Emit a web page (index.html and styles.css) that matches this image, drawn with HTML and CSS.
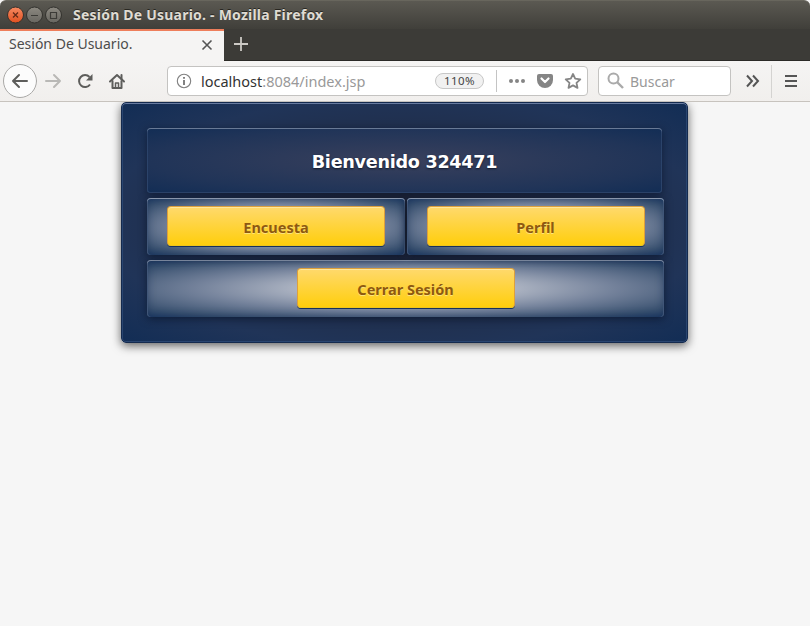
FILE: index.html
```html
<!DOCTYPE html>
<html lang="es">
<head>
<meta charset="utf-8">
<title>Sesión De Usuario.</title>
<link rel="stylesheet" href="styles.css">
</head>
<body>
<div class="window">
  <header class="titlebar">
    <svg class="controls" width="60" height="18" viewBox="0 0 60 18">
      <defs>
        <linearGradient id="close" x2="0" y2="1"><stop stop-color="#f68a62"/><stop offset="1" stop-color="#e2501f"/></linearGradient>
        <linearGradient id="grey" x2="0" y2="1"><stop stop-color="#8c8981"/><stop offset="1" stop-color="#686660"/></linearGradient>
      </defs>
      <g stroke="#32312d"><circle cx="11.500" cy="9" r="8" fill="url(#close)"/><circle cx="30.500" cy="9" r="8" fill="url(#grey)"/><circle cx="49.500" cy="9" r="8" fill="url(#grey)"/></g>
      <path d="M9 6.500l5 5M14 6.500l-5 5" stroke="#642a17" stroke-width="1.300"/>
      <path d="M27 9.500h7M46.500 6.500h6v6h-6z" fill="none" stroke="#3c3b37" stroke-width="1.200"/>
    </svg>
    <span class="window-title">Sesión De Usuario. - Mozilla Firefox</span>
  </header>
  <div class="tabs">
    <div class="tab"><span class="tab-title">Sesión De Usuario.</span>
      <svg class="tab-close" width="12" height="12" viewBox="0 0 12 12"><path d="M1.500 1.500l9 9M10.500 1.500l-9 9" stroke="#555" stroke-width="1.600"/></svg>
    </div>
    <svg class="new-tab" width="16" height="16" viewBox="0 0 16 16"><path d="M8 1v14M1 8h14" stroke="#cdcac5" stroke-width="1.800"/></svg>
  </div>
  <nav class="toolbar">
    <svg class="nav-icons" width="130" height="40" viewBox="0 0 130 40" fill="none" stroke="#5d5d5b" stroke-width="2" stroke-linecap="round" stroke-linejoin="round">
      <circle cx="20" cy="20" r="16.500" fill="#fcfcfc" stroke="#aaa9a7" stroke-width="1"/>
      <path d="M27 20H13M19 14l-6 6 6 6"/>
      <path d="M46 20h14M54 14l6 6-6 6" stroke="#b9b8b6"/>
      <path d="M90 23.500A6 6 0 1 1 89.500 16" stroke-linecap="butt"/>
      <path d="M92.500 13v6.500h-6.500z" fill="#5d5d5b" stroke="none"/>
      <path d="M110 20.500l7-6.500 7 6.500"/><path d="M112.500 20v7h9v-7"/><path d="M115.500 27v-5h3v5" stroke-width="1.500"/><path d="M121.500 14v4"/>
    </svg>
    <div class="address">
      <svg class="info" width="16" height="16" viewBox="0 0 16 16" fill="none" stroke="#818181"><circle cx="8" cy="8" r="6.700" stroke-width="1.100"/><path d="M8 7v5M8 4v1.800" stroke-width="2"/></svg>
      <span class="url"><b>localhost</b>:8084/index.jsp</span>
      <span class="zoom">110%</span>
      <svg class="page-actions" width="88" height="28" viewBox="0 0 88 28">
        <path d="M.5 3v22" stroke="#c4c4c4"/>
        <g fill="#858585"><circle cx="15" cy="14" r="2"/><circle cx="21" cy="14" r="2"/><circle cx="27" cy="14" r="2"/><path d="M43 7h12q2 0 2 2v4a8 8 0 0 1-16 0V9q0-2 2-2z"/></g>
        <path d="M45.500 11.500l3.500 3.500 3.500-3.500" fill="none" stroke="white" stroke-width="2.200" stroke-linecap="round" stroke-linejoin="round"/>
        <path d="M77 7l2.200 4.700 5.100.6-3.800 3.500 1 5.100-4.500-2.500-4.500 2.500 1-5.100-3.800-3.500 5.100-.6z" fill="none" stroke="#858585" stroke-width="1.800" stroke-linejoin="round"/>
      </svg>
    </div>
    <div class="search"><svg width="18" height="18" viewBox="0 0 18 18" fill="none" stroke="#aaa"><circle cx="6.500" cy="6.500" r="5" stroke-width="2"/><path d="M10 10l6 6" stroke-width="2.400"/></svg><span>Buscar</span></div>
    <svg class="menu-icons" width="65" height="40" viewBox="0 0 65 40" fill="none" stroke="#555" stroke-width="2"><path d="M2 14.500l5 5.500-5 5.500M8 14.500l5 5.500-5 5.500"/><path d="M26.500 4v33" stroke="#d4d3d1" stroke-width="1"/><path d="M40 15h12M40 20h12M40 25h12"/></svg>
  </nav>
  <main class="page">
    <section class="card">
      <h1 class="welcome">Bienvenido 324471</h1>
      <div class="pair">
        <div class="panel"><button>Encuesta</button></div>
        <div class="panel"><button>Perfil</button></div>
      </div>
      <div class="panel wide"><button>Cerrar Sesión</button></div>
    </section>
  </main>
</div>
</body>
</html>
```
FILE: styles.css
```css
* { box-sizing: border-box; }
body { margin: 0; background: #f6f6f6; overflow: hidden; font-family: "Noto Sans", sans-serif; }
svg { display: block; flex-shrink: 0; }
.window { width: 810px; height: 626px; }
.titlebar { height: 29px; display: flex; align-items: center; padding-left: 4px; border-radius: 6px 6px 0 0; background: linear-gradient(#5b5952, #403f3a); border-top: 1px solid #68665d; }
.window-title { margin-left: 9px; font-size: 14px; line-height: 20px; font-weight: 700; color: #dfdbd2; white-space: nowrap; letter-spacing: .22px; text-shadow: 0 -1px #282722; }
.tabs { height: 32px; display: flex; background: #3c3b37; border-bottom: 1px solid #2b2a27; }
.tab { width: 224px; height: 32px; display: flex; align-items: center; justify-content: space-between; padding: 0 11px 2px 9px; background: #f5f4f3; border-top: 2px solid #ee7e5b; }
.tab-title { color: #4c4c4c; font-size: 14px; line-height: 20px; padding-bottom: 2px; }
.new-tab { margin: 7px 0 0 9px; }
.toolbar { height: 41px; display: flex; background: linear-gradient(#f5f4f3, #f1efed); border-bottom: 1px solid #c7c3be; }
.nav-icons { margin-right: 37px; }
.address { width: 421px; height: 30px; margin-top: 5px; padding: 0 3px 0 8px; display: flex; align-items: center; background: #fff; border: 1px solid #c4c3c1; border-radius: 4px; }
.url { margin-left: 9px; width: 235px; font-size: 14.5px; color: #999; letter-spacing: 0; white-space: nowrap; }
.url b { font-weight: 400; color: #333; }
.zoom { width: 49px; height: 16px; margin-right: 12px; border: 1px solid #c7c7c7; border-radius: 8px; background: #f1f1f1; color: #444; font-size: 11.5px; letter-spacing: .4px; line-height: 14px; text-align: center; flex-shrink: 0; }
.search { width: 133px; height: 30px; margin: 5px 0 0 10px; padding-left: 8px; display: flex; align-items: center; gap: 5px; background: #fff; border: 1px solid #c4c3c1; border-radius: 4px; color: #999; font-size: 14px; }
.menu-icons { margin-left: 14px; }
.page { height: 524px; overflow: hidden; }
.card { width: 567px; height: 241px; margin-left: 121px; padding: 25px 23px 25px 25px; border: 1px solid #142a4e; border-radius: 5px; background: radial-gradient(ellipse farthest-corner at center, #222637, #202b44 38%, #203458 75%, #122d55); box-shadow: inset 0 1px #687ba0, inset 1px 0 #294570, inset -1px 0 #294570, inset 0 -1px #294570, 0 3px 10px rgba(0,0,0,.6); }
.welcome { width: 515px; height: 65px; margin: 0 0 5px; border-radius: 4px; color: #fff; font: bold 17.6px/69px "DejaVu Sans", sans-serif; letter-spacing: -.27px; text-align: center; text-shadow: 0 1px 2px #111a2c; background: radial-gradient(ellipse farthest-corner, #39405c, #203458 70%, #122d55); box-shadow: inset 0 1px #687995, inset 1px 0 #2b436a, inset -1px 0 #2b436a, inset 0 -1px #2b436a, 0 2px 9px rgba(5,15,35,.55); }
.pair { width: 517px; display: flex; gap: 2px; margin-bottom: 5px; }
.panel { width: 258px; height: 57px; padding-top: 8px; display: flex; justify-content: center; align-items: flex-start; border-radius: 4px; background: radial-gradient(ellipse farthest-corner, #c6cad4 0%, #b5bbc8 25%, #74829b 57%, #38506f 87%, #1e3b65); box-shadow: inset 0 1px #8996ac, inset 1px 0 #405678, inset -1px 0 #405678, inset 0 0 9px rgba(22,45,84,.6), 0 2px 9px rgba(5,15,35,.6); }
.panel:last-child:not(.wide) { width: 257px; }
.wide { width: 517px; }
button { width: 218px; height: 40px; padding: 2px 0 0; border: 1px solid #dda03c; border-bottom-color: #f0c51b; border-radius: 4px; color: #8e5910; font: bold 14.5px/20px "Noto Sans", sans-serif; text-shadow: 0 1px #fce47c; background: linear-gradient(#ffd96c, #ffce0c); box-shadow: inset 0 1px #ffe799, 0 1px #17315b; }
```
